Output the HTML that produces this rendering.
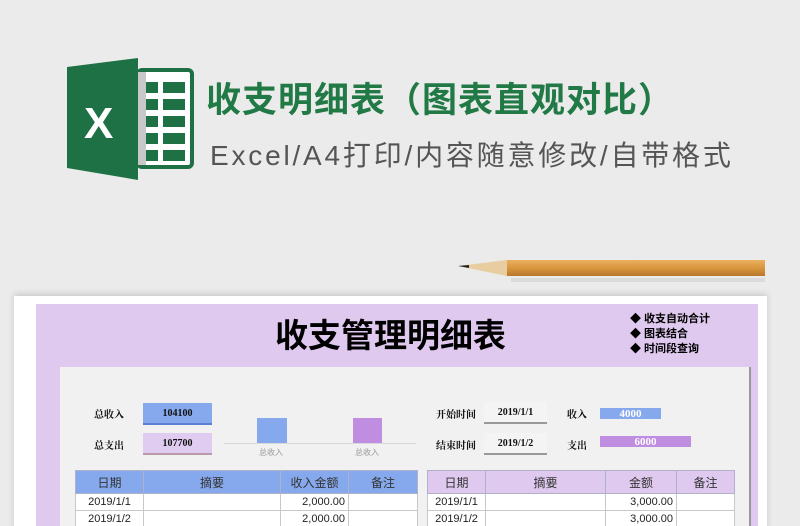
<!DOCTYPE html><html><head><meta charset="utf-8"><style>
html,body{margin:0;width:800px;height:526px;overflow:hidden}
body{background:#ebebeb;position:relative;font-family:"Liberation Sans","Noto Sans CJK SC",sans-serif}
.a{position:absolute}
.t{font-family:"Liberation Serif","Noto Serif CJK SC",serif;font-weight:bold;font-size:10px;color:#111}
.c{display:flex;align-items:center;justify-content:center}
table{border-collapse:collapse;position:absolute;font-size:11px;table-layout:fixed;font-family:"Liberation Sans","Noto Sans CJK SC",sans-serif}
td{border:1px solid #c8c8c8;height:16px;padding:0 3px;background:#fff;color:#222}
th{height:20px;font-weight:normal;font-size:12px;border:1px solid #b0b0c8;color:#333}
</style></head><body>
<svg class="a" style="left:60px;top:55px" width="140" height="130">
<rect x="78" y="15" width="54" height="97" rx="4" fill="#fff" stroke="#1e7145" stroke-width="4"/>
<g fill="#1e7145"><rect x="84" y="27" width="14" height="11"/><rect x="103" y="27" width="22" height="11"/><rect x="84" y="44" width="14" height="11"/><rect x="103" y="44" width="22" height="11"/><rect x="84" y="61" width="14" height="11"/><rect x="103" y="61" width="22" height="11"/><rect x="84" y="78" width="14" height="11"/><rect x="103" y="78" width="22" height="11"/><rect x="84" y="95" width="14" height="11"/><rect x="103" y="95" width="22" height="11"/></g>
<rect x="78" y="17" width="8" height="93" fill="#c8c8c8"/>
<path d="M7 12 L78 3 L78 125 L7 113Z" fill="#1e7145"/>
<text x="24" y="83" font-family="Liberation Sans" font-weight="bold" font-size="44" fill="#fff">X</text>
</svg>
<div class="a" style="left:206px;top:72px;font-size:35px;font-weight:bold;color:#217a46;letter-spacing:1px">收支明细表（图表直观对比）</div>
<div class="a" style="left:210px;top:134px;font-size:28px;color:#555;letter-spacing:2.8px">Excel/A4打印/内容随意修改/自带格式</div>
<svg class="a" style="left:455px;top:258px" width="315" height="26">
<defs><linearGradient id="w" x1="0" y1="0" x2="0" y2="1"><stop offset="0" stop-color="#e9b060"/><stop offset=".5" stop-color="#d9963e"/><stop offset="1" stop-color="#b8782c"/></linearGradient></defs>
<path d="M3 8 L52 2 L52 18 Z" fill="#e8cda0"/><path d="M3 8 L14 7 L14 10Z" fill="#222"/>
<rect x="52" y="2" width="258" height="16" fill="url(#w)"/>
<rect x="56" y="20" width="254" height="4" fill="#d0d0d0" opacity=".6"/>
</svg>
<div class="a" style="left:14px;top:296px;width:753px;height:240px;background:#fff;box-shadow:0 -2px 6px rgba(0,0,0,.15)"></div>
<div class="a" style="left:36px;top:304px;width:722px;height:230px;background:#dfc9ef"></div>
<div class="a" style="left:275px;top:313px;font-size:33px;font-weight:bold;color:#000;font-family:'Noto Sans CJK SC',sans-serif;line-height:40px">收支管理明细表</div>
<div class="a" style="left:630px;top:312px;font-size:11px;font-weight:bold;line-height:15px;color:#000">◆ 收支自动合计<br>◆ 图表结合<br>◆ 时间段查询</div>
<div class="a" style="left:60px;top:367px;width:689px;height:170px;background:#f1f1f1;border-right:2px solid #999"></div>
<div class="a t" style="left:94px;top:406px">总收入</div>
<div class="a t" style="left:94px;top:437px">总支出</div>
<div class="a t c" style="left:143px;top:403px;width:69px;height:20px;background:#86a8ec;border-bottom:2px solid #5a80d6">104100</div>
<div class="a t c" style="left:143px;top:433px;width:69px;height:20px;background:#e0ccf0;border-bottom:2px solid #b9a">107700</div>
<div class="a" style="left:224px;top:443px;width:192px;height:1px;background:#d8d8d8"></div>
<div class="a" style="left:257px;top:418px;width:30px;height:25px;background:#86a8ec"></div>
<div class="a" style="left:353px;top:418px;width:29px;height:25px;background:#c08ee0"></div>
<div class="a" style="left:259px;top:447px;font-size:8px;color:#999">总收入</div>
<div class="a" style="left:355px;top:447px;font-size:8px;color:#999">总收入</div>
<div class="a t" style="left:436px;top:406px">开始时间</div>
<div class="a t" style="left:436px;top:437px">结束时间</div>
<div class="a t c" style="left:484px;top:402px;width:63px;height:20px;background:#f4f4f4;border-bottom:2px solid #999">2019/1/1</div>
<div class="a t c" style="left:484px;top:433px;width:63px;height:20px;background:#f4f4f4;border-bottom:2px solid #999">2019/1/2</div>
<div class="a t" style="left:567px;top:406px">收入</div>
<div class="a t" style="left:567px;top:437px">支出</div>
<div class="a t c" style="left:600px;top:408px;width:61px;height:11px;background:#86a8ec;color:#fff;font-size:11px">4000</div>
<div class="a t c" style="left:600px;top:436px;width:91px;height:11px;background:#c08ee0;color:#fff;font-size:11px">6000</div>
<table style="left:75px;top:470px;width:342px">
<colgroup><col style="width:68px"><col style="width:137px"><col style="width:68px"><col style="width:69px"></colgroup>
<tr style="background:#86a8ec"><th>日期</th><th>摘要</th><th>收入金额</th><th>备注</th></tr>
<tr><td style="text-align:center">2019/1/1</td><td></td><td style="text-align:right">2,000.00</td><td></td></tr>
<tr><td style="text-align:center">2019/1/2</td><td></td><td style="text-align:right">2,000.00</td><td></td></tr>
</table>
<table style="left:427px;top:470px;width:307px">
<colgroup><col style="width:58px"><col style="width:120px"><col style="width:71px"><col style="width:58px"></colgroup>
<tr style="background:#dfc9ef"><th>日期</th><th>摘要</th><th>金额</th><th>备注</th></tr>
<tr><td style="text-align:center">2019/1/1</td><td></td><td style="text-align:right">3,000.00</td><td></td></tr>
<tr><td style="text-align:center">2019/1/2</td><td></td><td style="text-align:right">3,000.00</td><td></td></tr>
</table>
</body></html>
